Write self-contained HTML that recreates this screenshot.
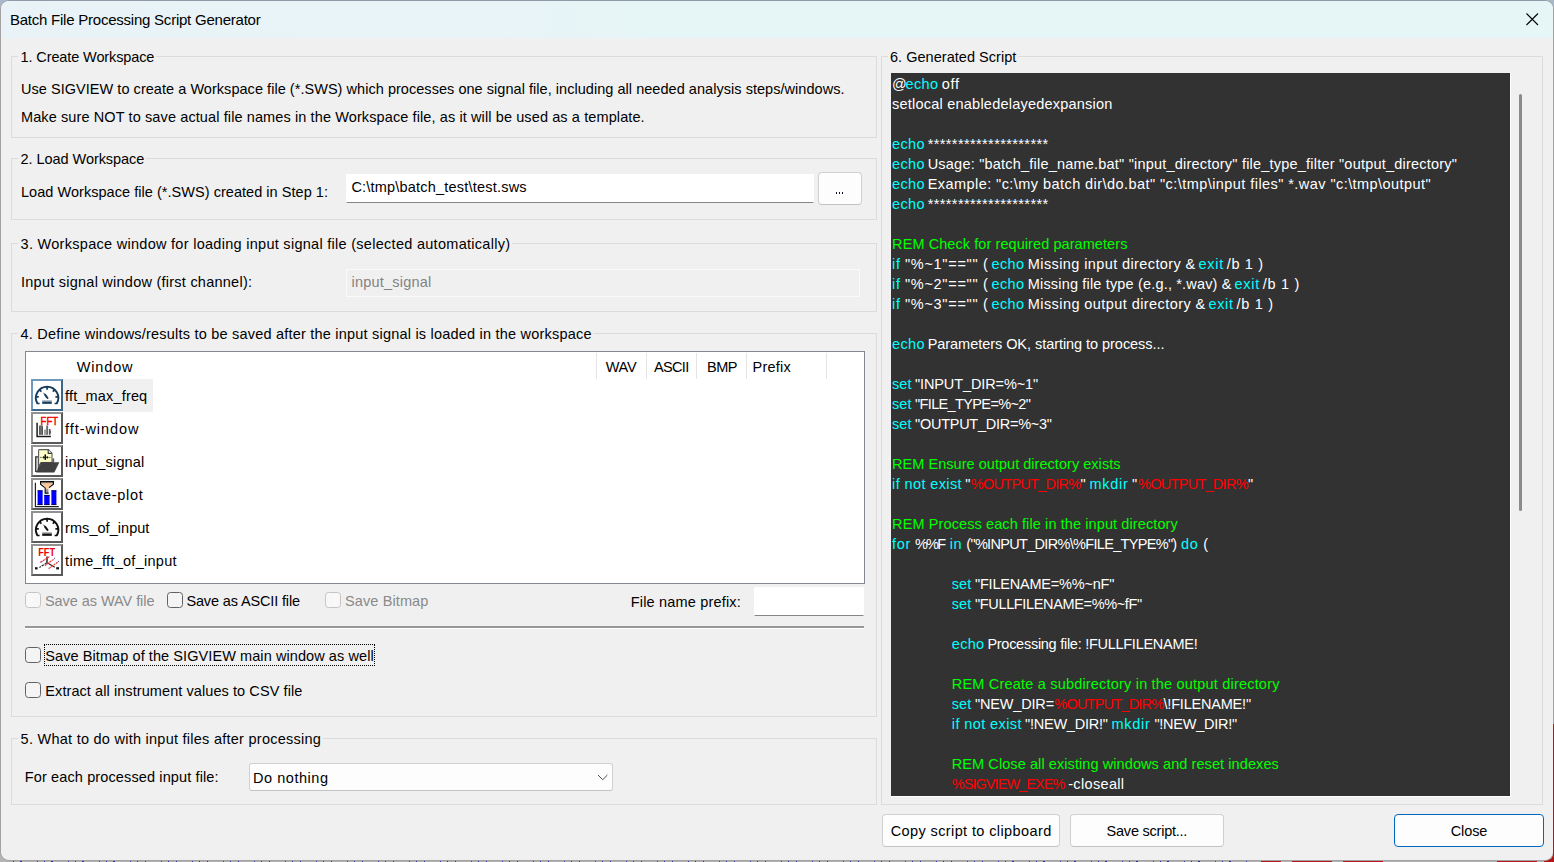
<!DOCTYPE html>
<html><head><meta charset="utf-8"><title>Batch File Processing Script Generator</title>
<style>
*{box-sizing:border-box;margin:0;padding:0}
html,body{width:1554px;height:862px;overflow:hidden}
body{position:relative;background:#b4b4b4;font-family:"Liberation Sans",sans-serif;font-size:14.5px;line-height:20px}
.bgtop{position:absolute;left:0;top:0;width:1554px;height:12px;background:#a9b8c8}
.bgred{position:absolute;top:861px;height:1px;background:#b8161c}
.bgcr{position:absolute;left:1544px;top:852px;width:10px;height:10px;background:#b01414}
.bgredr{position:absolute;left:1553px;top:724px;width:1px;height:138px;background:#b01818}
.win{position:absolute;left:0;top:0;width:1554px;height:861px;background:#f0f0f0;border:1px solid #a2a2a2;border-top-color:#8f9aa8;border-radius:9px;overflow:hidden}
.tb{position:absolute;left:0;top:1px;width:1554px;height:37px;background:linear-gradient(90deg,#e9f3f7 0%,#e8f4f7 33%,#e6f5f6 42%,#e6f6f6 100%)}
.t{position:absolute;white-space:pre;height:20px;line-height:20px}
.t.s{color:#fff}
.g{position:absolute;border:1px solid #dcdcdc}
.gl{position:absolute;background:#f0f0f0;height:4px}
.inp{position:absolute;background:#fff;border:1px solid #fff;border-bottom-color:#868686}
.btn{position:absolute;background:#fdfdfd;border:1px solid #d0d0d0;border-bottom-color:#c2c2c2;border-radius:4px}
.cb{position:absolute;width:16px;height:16px;border:1px solid #626262;border-radius:3.5px;background:#f4f4f4}
.cb.d{border-color:#c4c4c4;background:#f8f8f8}
.ic{position:absolute;left:31px;width:31px;height:31px;border:2px solid #7f7f7f;background:#fff}
.ic svg{position:absolute;left:0;top:0}
.hs{position:absolute;top:353px;width:1px;height:26px;background:#e5e5e5}
</style></head><body>
<div class="bgtop"></div>
<div class="bgcr"></div>
<div class="win"></div>
<div class="bgredr"></div>
<div style="position:absolute;left:13px;top:861px;width:1237px;height:1px;background:repeating-linear-gradient(90deg,#2a2a9a 0 1.4px,transparent 1.4px 7.5px,#2a2a9a 7.5px 8.6px,transparent 8.6px 24px,#3a3aa0 24px 25px,transparent 25px 31px)"></div>
<div class="bgred" style="left:1261px;width:20px"></div><div class="bgred" style="left:1292px;width:40px"></div><div class="bgred" style="left:1343px;width:40px"></div><div class="bgred" style="left:1497px;width:40px"></div>
<div class="tb" style="border-radius:8px 8px 0 0;left:1px;width:1552px"></div>
<svg style="position:absolute;left:1522px;top:9px" width="20" height="20"><path d="M4.5 4.5 L16 16 M16 4.5 L4.5 16" stroke="#000" stroke-width="1.1" fill="none"/></svg>

<!-- group boxes -->
<div class="g" style="left:11px;top:56px;width:866px;height:82px"></div>
<div class="g" style="left:11px;top:158px;width:866px;height:62px"></div>
<div class="g" style="left:11px;top:243px;width:866px;height:69px"></div>
<div class="g" style="left:11px;top:333px;width:866px;height:384px"></div>
<div class="g" style="left:11px;top:738px;width:866px;height:67px"></div>
<div class="g" style="left:881px;top:56px;width:662px;height:749px"></div>
<div class="gl" style="left:18px;top:54px;width:138px"></div>
<div class="gl" style="left:18px;top:156px;width:128px"></div>
<div class="gl" style="left:18px;top:241px;width:494px"></div>
<div class="gl" style="left:18px;top:331px;width:575px"></div>
<div class="gl" style="left:18px;top:736px;width:305px"></div>
<div class="gl" style="left:888px;top:54px;width:130px"></div>

<!-- group 2 -->
<div class="inp" style="left:346px;top:174px;width:468px;height:29px"></div>
<div class="btn" style="left:818px;top:172px;width:44px;height:33px"></div>
<div style="position:absolute;left:835.7px;top:192px;width:1.6px;height:2px;background:#1a0a2a;box-shadow:3px 0 0 #1a0a2a,6px 0 0 #1a0a2a"></div>
<!-- group 3 -->
<div style="position:absolute;left:346px;top:269px;width:514px;height:28px;background:#f0f0f0;border:1px solid #fafafa"></div>

<!-- list -->
<div style="position:absolute;left:25px;top:351px;width:840px;height:233px;background:#fff;border:1px solid #828790"></div>
<div class="hs" style="left:596px"></div><div class="hs" style="left:646px"></div><div class="hs" style="left:696px"></div><div class="hs" style="left:746px"></div><div class="hs" style="left:826px"></div>
<div style="position:absolute;left:62px;top:379px;width:91px;height:33px;background:#f0f0f0"></div>
<svg style="position:absolute;left:31px;top:379px" width="32" height="32" viewBox="0 0 32 32"><rect x="0" y="0" width="32" height="32" fill="#fff"/><path d="M0 0 H32 V2 H2 V32 H0 Z" fill="#6f98bd"/><path d="M32 0 V32 H0 L2 30 H30 V2 Z" fill="#3f6585"/><g><g fill="none" stroke="#173d5e" stroke-linecap="butt">
<path d="M6.4 24.5 A11.2 11.2 0 1 1 25.8 24.5" stroke-width="1.9"/>
<path d="M16.1 7.6 V10.8 M8.3 10.6 L10.4 12.7 M23.9 10.6 L21.8 12.7 M5 17.8 H7.8 M27.2 17.8 H24.4" stroke-width="1.7"/>
<path d="M12.4 13.8 L14.6 16.2" stroke-width="1"/>
<path d="M14.2 15.8 L16.5 19" stroke-width="2.1" stroke-linecap="round"/>
<path d="M11.2 21.9 H20.8" stroke-width="1.2" opacity="0.45"/>
<path d="M11.2 23.7 H20.8" stroke-width="2.3"/>
<path d="M5.8 24.5 H8.6 M23.6 24.5 H26.4" stroke-width="1.5"/>
</g></g></svg>
<svg style="position:absolute;left:31px;top:412px" width="32" height="32" viewBox="0 0 32 32"><rect x="0" y="0" width="32" height="32" fill="#fff"/><path d="M0 0 H32 V2 H2 V32 H0 Z" fill="#919191"/><path d="M32 0 V32 H0 L2 30 H30 V2 Z" fill="#5a5a5a"/><g><text x="9.6" y="13" font-family="Liberation Sans,sans-serif" font-size="11.6" fill="#f00000" stroke="#f00000" stroke-width="0.45" textLength="17.4" lengthAdjust="spacingAndGlyphs">FFT</text>
<rect x="8.1" y="13.4" width="3.9" height="9.4" fill="#8a8a8a"/>
<path d="M8.6 14 V22.8 M10 13.4 V22.8 M11.5 14.5 V22.8" stroke="#3a3a3a" stroke-width="0.7"/>
<rect x="13.2" y="17.6" width="1.6" height="5.2" fill="#8a8a8a"/>
<rect x="15.2" y="13.6" width="1.9" height="9.2" fill="#808080"/>
<path d="M16.1 13.6 V22.8" stroke="#444" stroke-width="0.6"/>
<rect x="17.9" y="17" width="1.6" height="5.8" fill="#555"/>
<path d="M19.3 18.5 L20.2 20 L19.3 21.5 Z" fill="#222"/>
<path d="M6.1 10.8 V24.4 H19.9" fill="none" stroke="#1c1c1c" stroke-width="1.5"/></g></svg>
<svg style="position:absolute;left:31px;top:445px" width="32" height="32" viewBox="0 0 32 32"><rect x="0" y="0" width="32" height="32" fill="#fff"/><path d="M0 0 H32 V2 H2 V32 H0 Z" fill="#919191"/><path d="M32 0 V32 H0 L2 30 H30 V2 Z" fill="#5a5a5a"/><g><path d="M4.7 11.8 H7.6 V26.5 H4.7 Z" fill="#cfcfcf" stroke="#2e2e2e" stroke-width="1.2"/>
<path d="M21.8 17.4 V14 L22.8 13.6 V17.4 Z" fill="#555" stroke="#555" stroke-width="0.6"/>
<path d="M8.2 4.6 H17.4 L21 8.2 V17.6 H10 L7.6 21.5 V5.2 Z" fill="#ffffc8" stroke="#5a5a5a" stroke-width="1.1"/>
<path d="M17.2 4.8 V8.4 H20.8" fill="#fff" stroke="#333" stroke-width="1.1"/>
<path d="M9.2 12.4 H10.6 M11.4 12.4 H17.6 M18.2 12.4 H19.4" stroke="#222" stroke-width="0.8"/>
<path d="M14.3 9.4 V14.9" stroke="#050505" stroke-width="1.5"/>
<path d="M12.7 11.2 V13.6 M16.3 11.2 V13.6" stroke="#111" stroke-width="1.1"/>
<path d="M10.4 17.4 H28 L23.2 27.2 H5.4 Z" fill="#404040" stroke="#3a3a3a" stroke-width="0.5"/></g></svg>
<svg style="position:absolute;left:31px;top:478px" width="32" height="32" viewBox="0 0 32 32"><rect x="0" y="0" width="32" height="32" fill="#fff"/><path d="M0 0 H32 V2 H2 V32 H0 Z" fill="#919191"/><path d="M32 0 V32 H0 L2 30 H30 V2 Z" fill="#5a5a5a"/><g><path d="M4.4 4.8 V28.6 H27.8" fill="none" stroke="#222" stroke-width="1.2"/>
<rect x="6.6" y="12.4" width="5" height="14.4" fill="#0000ff"/>
<rect x="13.2" y="17" width="5.4" height="9.8" fill="#0000ff"/>
<rect x="20.4" y="12.4" width="5" height="14.4" fill="#0000ff"/>
<path d="M6.6 12.8 H11.6 M13.2 17.4 H18.6 M20.4 12.8 H25.4 M6.4 26.6 H11.6 M13.2 26.6 H18.6 M20.4 26.6 H25.4" stroke="#00004a" stroke-width="0.9"/>
<path d="M10 5 H22 L17.6 9.4 V11.4 H15 V9.4 Z" fill="#ffc890"/>
<rect x="9.6" y="4.1" width="13" height="1.1" fill="#8a8a8a"/>
<path d="M9 3.6 H23" stroke="#0a0a0a" stroke-width="1.3"/>
<path d="M9.6 3.6 V6.2 L13.8 9.6 M22.4 3.6 V6.2 L18 9.6" fill="none" stroke="#0a0a0a" stroke-width="1.2"/>
<rect x="15" y="11.2" width="2.4" height="3.6" fill="#8f8f8f"/>
<path d="M14.2 9.4 V15.1 H17.6" fill="none" stroke="#0a0a0a" stroke-width="1.2"/></g></svg>
<svg style="position:absolute;left:31px;top:511px" width="32" height="32" viewBox="0 0 32 32"><rect x="0" y="0" width="32" height="32" fill="#fff"/><path d="M0 0 H32 V2 H2 V32 H0 Z" fill="#919191"/><path d="M32 0 V32 H0 L2 30 H30 V2 Z" fill="#5a5a5a"/><g><g fill="none" stroke="#111" stroke-linecap="butt">
<path d="M6.4 24.5 A11.2 11.2 0 1 1 25.8 24.5" stroke-width="1.9"/>
<path d="M16.1 7.6 V10.8 M8.3 10.6 L10.4 12.7 M23.9 10.6 L21.8 12.7 M5 17.8 H7.8 M27.2 17.8 H24.4" stroke-width="1.7"/>
<path d="M12.4 13.8 L14.6 16.2" stroke-width="1"/>
<path d="M14.2 15.8 L16.5 19" stroke-width="2.1" stroke-linecap="round"/>
<path d="M11.2 21.9 H20.8" stroke-width="1.2" opacity="0.45"/>
<path d="M11.2 23.7 H20.8" stroke-width="2.3"/>
<path d="M5.8 24.5 H8.6 M23.6 24.5 H26.4" stroke-width="1.5"/>
</g></g></svg>
<svg style="position:absolute;left:31px;top:544px" width="32" height="32" viewBox="0 0 32 32"><rect x="0" y="0" width="32" height="32" fill="#fff"/><path d="M0 0 H32 V2 H2 V32 H0 Z" fill="#919191"/><path d="M32 0 V32 H0 L2 30 H30 V2 Z" fill="#5a5a5a"/><g><text x="7.2" y="11.8" font-family="Liberation Sans,sans-serif" font-weight="bold" font-size="11" fill="#f00000" textLength="16.8" lengthAdjust="spacingAndGlyphs">FFT</text>
<path d="M16 12.4 V18.8" stroke="#2a2a2a" stroke-width="1.5"/>
<path d="M15.8 18.8 L8.4 23.6" fill="none" stroke="#2a2a2a" stroke-width="1.2" stroke-dasharray="2.6 0.9"/>
<path d="M16.2 18.8 L23.8 23.3" fill="none" stroke="#2a2a2a" stroke-width="1.2"/>
<path d="M9.6 18.2 L18.4 12.6 M14 21.6 L22.8 15.2 M18 24.4 L27.4 17.6" stroke="#f03030" stroke-width="1.1" stroke-dasharray="2.2 0.6"/>
<rect x="4" y="23.2" width="2.6" height="2.2" fill="#111"/><rect x="25.2" y="23.2" width="2.8" height="2.2" fill="#111"/>
<circle cx="23.6" cy="14.2" r="0.7" fill="#7070e0"/><circle cx="27.6" cy="17.4" r="0.7" fill="#7070e0"/>
<circle cx="9.8" cy="18.2" r="0.6" fill="#c050a0"/><circle cx="18" cy="24.4" r="0.6" fill="#e060a0"/></g></svg>

<!-- checkbox row -->
<div class="cb d" style="left:25px;top:592px"></div>
<div class="cb" style="left:167px;top:592px"></div>
<div class="cb d" style="left:325px;top:592px"></div>
<div class="inp" style="left:754px;top:587px;width:110px;height:29px"></div>
<div style="position:absolute;left:25px;top:626px;width:839px;height:3px;background:#fff;border-top:2px solid #979797"></div>
<div class="cb" style="left:25px;top:647px"></div>
<div style="position:absolute;left:44px;top:644px;width:331px;height:22px;border:1px dotted #000"></div>
<div class="cb" style="left:25px;top:682px"></div>

<!-- group 5 -->
<div class="btn" style="left:249px;top:763px;width:364px;height:28px;border-radius:3px"></div>
<svg style="position:absolute;left:595px;top:770px" width="16" height="14"><path d="M3 5 L7.7 9.7 L12.4 5" stroke="#505050" stroke-width="1" fill="none"/></svg>

<!-- script -->
<div style="position:absolute;left:891px;top:73px;width:620px;height:724px;background:#fff"></div>
<div style="position:absolute;left:891px;top:73px;width:619px;height:723px;background:#323232"></div>
<div style="position:absolute;left:1519px;top:94px;width:3px;height:417px;background:#8b8b8b;border-radius:1.5px"></div>

<!-- buttons -->
<div class="btn" style="left:882px;top:814px;width:178px;height:33px"></div>
<div class="btn" style="left:1070px;top:814px;width:154px;height:33px"></div>
<div class="btn" style="left:1394px;top:814px;width:150px;height:33px;border:1.5px solid #0067c0;background:#fdfdfd"></div>

<div class="t title" style="left:9.9px;top:9.80px;letter-spacing:-0.229px;color:#000;font-size:15px">Batch File Processing Script Generator</div>
<div class="t " style="left:20.6px;top:46.98px;letter-spacing:-0.119px;color:#000">1. Create Workspace</div>
<div class="t " style="left:21.0px;top:78.98px;letter-spacing:0.040px;color:#000">Use SIGVIEW to create a Workspace file (*.SWS) which processes one signal file, including all needed analysis steps/windows.</div>
<div class="t " style="left:21.0px;top:106.98px;letter-spacing:0.106px;color:#000">Make sure NOT to save actual file names in the Workspace file, as it will be used as a template.</div>
<div class="t " style="left:20.6px;top:148.98px;letter-spacing:-0.061px;color:#000">2. Load Workspace</div>
<div class="t " style="left:21.0px;top:181.98px;letter-spacing:0.040px;color:#000">Load Workspace file (*.SWS) created in Step 1:</div>
<div class="t " style="left:351.4px;top:176.98px;letter-spacing:0.206px;color:#000">C:\tmp\batch_test\test.sws</div>
<div class="t " style="left:20.6px;top:233.98px;letter-spacing:0.283px;color:#000">3. Workspace window for loading input signal file (selected automatically)</div>
<div class="t " style="left:21.0px;top:271.98px;letter-spacing:0.244px;color:#000">Input signal window (first channel):</div>
<div class="t " style="left:351.6px;top:271.98px;letter-spacing:0.199px;color:#838383">input_signal</div>
<div class="t " style="left:20.6px;top:323.98px;letter-spacing:0.209px;color:#000">4. Define windows/results to be saved after the input signal is loaded in the workspace</div>
<div class="t " style="left:76.8px;top:356.98px;letter-spacing:0.824px;color:#000">Window</div>
<div class="t " style="left:605.7px;top:356.98px;letter-spacing:-0.211px;color:#000">WAV</div>
<div class="t " style="left:653.9px;top:356.98px;letter-spacing:-0.644px;color:#000">ASCII</div>
<div class="t " style="left:707.0px;top:356.98px;letter-spacing:-0.511px;color:#000">BMP</div>
<div class="t " style="left:752.6px;top:356.98px;letter-spacing:0.204px;color:#000">Prefix</div>
<div class="t " style="left:65.1px;top:385.98px;letter-spacing:0.160px;color:#000">fft_max_freq</div>
<div class="t " style="left:65.1px;top:418.98px;letter-spacing:0.920px;color:#000">fft-window</div>
<div class="t " style="left:65.1px;top:451.98px;letter-spacing:0.163px;color:#000">input_signal</div>
<div class="t " style="left:65.1px;top:484.98px;letter-spacing:0.666px;color:#000">octave-plot</div>
<div class="t " style="left:65.1px;top:517.98px;letter-spacing:0.043px;color:#000">rms_of_input</div>
<div class="t " style="left:65.1px;top:550.98px;letter-spacing:0.284px;color:#000">time_fft_of_input</div>
<div class="t " style="left:45.0px;top:590.98px;letter-spacing:-0.060px;color:#8a8a8a">Save as WAV file</div>
<div class="t " style="left:186.4px;top:590.98px;letter-spacing:-0.139px;color:#000">Save as ASCII file</div>
<div class="t " style="left:345.1px;top:590.98px;letter-spacing:0.098px;color:#8a8a8a">Save Bitmap</div>
<div class="t " style="left:630.7px;top:591.98px;letter-spacing:0.182px;color:#000">File name prefix:</div>
<div class="t " style="left:45.3px;top:645.98px;letter-spacing:0.080px;color:#000">Save Bitmap of the SIGVIEW main window as well</div>
<div class="t " style="left:45.3px;top:680.98px;letter-spacing:0.079px;color:#000">Extract all instrument values to CSV file</div>
<div class="t " style="left:20.6px;top:728.98px;letter-spacing:0.256px;color:#000">5. What to do with input files after processing</div>
<div class="t " style="left:24.8px;top:766.98px;letter-spacing:0.123px;color:#000">For each processed input file:</div>
<div class="t " style="left:253.1px;top:767.98px;letter-spacing:0.529px;color:#000">Do nothing</div>
<div class="t " style="left:890.0px;top:46.98px;letter-spacing:0.031px;color:#000">6. Generated Script</div>
<div class="t " style="left:890.7px;top:820.98px;letter-spacing:0.391px;color:#000">Copy script to clipboard</div>
<div class="t " style="left:1106.6px;top:820.98px;letter-spacing:-0.232px;color:#000">Save script...</div>
<div class="t " style="left:1450.7px;top:820.98px;letter-spacing:-0.095px;color:#000">Close</div>
<div class="t s" style="left:892.1px;top:73.98px;letter-spacing:0.000px;color:#fff">@</div>
<div class="t s" style="left:905.6px;top:73.98px;letter-spacing:0.303px;color:#00ffff">echo</div>
<div class="t s" style="left:941.8px;top:73.98px;letter-spacing:0.700px;color:#fff">off</div>
<div class="t s" style="left:892.1px;top:93.98px;letter-spacing:0.220px;color:#fff">setlocal enabledelayedexpansion</div>
<div class="t s" style="left:892.1px;top:133.98px;letter-spacing:0.303px;color:#00ffff">echo</div>
<div class="t s" style="left:927.7px;top:133.98px;letter-spacing:0.398px;color:#fff">********************</div>
<div class="t s" style="left:892.1px;top:153.98px;letter-spacing:0.303px;color:#00ffff">echo</div>
<div class="t s" style="left:927.7px;top:153.98px;letter-spacing:0.211px;color:#fff">Usage: &quot;batch_file_name.bat&quot; &quot;input_directory&quot; file_type_filter &quot;output_directory&quot;</div>
<div class="t s" style="left:892.1px;top:173.98px;letter-spacing:0.303px;color:#00ffff">echo</div>
<div class="t s" style="left:927.7px;top:173.98px;letter-spacing:0.438px;color:#fff">Example: &quot;c:\my batch dir\do.bat&quot; &quot;c:\tmp\input files&quot; *.wav &quot;c:\tmp\output&quot;</div>
<div class="t s" style="left:892.1px;top:193.98px;letter-spacing:0.303px;color:#00ffff">echo</div>
<div class="t s" style="left:927.7px;top:193.98px;letter-spacing:0.398px;color:#fff">********************</div>
<div class="t s" style="left:892.1px;top:233.98px;letter-spacing:0.075px;color:#00ff00">REM Check for required parameters</div>
<div class="t s" style="left:892.1px;top:253.98px;letter-spacing:0.700px;color:#00ffff">if</div>
<div class="t s" style="left:905.0px;top:253.98px;letter-spacing:0.700px;color:#fff">&quot;%~1&quot;==&quot;&quot; (</div>
<div class="t s" style="left:991.6px;top:253.98px;letter-spacing:0.303px;color:#00ffff">echo</div>
<div class="t s" style="left:1027.8px;top:253.98px;letter-spacing:0.396px;color:#fff">Missing input directory &amp;</div>
<div class="t s" style="left:1198.5px;top:253.98px;letter-spacing:0.700px;color:#00ffff">exit</div>
<div class="t s" style="left:1226.8px;top:253.98px;letter-spacing:0.647px;color:#fff">/b 1 )</div>
<div class="t s" style="left:892.1px;top:273.98px;letter-spacing:0.700px;color:#00ffff">if</div>
<div class="t s" style="left:905.0px;top:273.98px;letter-spacing:0.700px;color:#fff">&quot;%~2&quot;==&quot;&quot; (</div>
<div class="t s" style="left:991.6px;top:273.98px;letter-spacing:0.303px;color:#00ffff">echo</div>
<div class="t s" style="left:1027.8px;top:273.98px;letter-spacing:0.169px;color:#fff">Missing file type (e.g., *.wav) &amp;</div>
<div class="t s" style="left:1234.6px;top:273.98px;letter-spacing:0.700px;color:#00ffff">exit</div>
<div class="t s" style="left:1262.7px;top:273.98px;letter-spacing:0.700px;color:#fff">/b 1 )</div>
<div class="t s" style="left:892.1px;top:293.98px;letter-spacing:0.700px;color:#00ffff">if</div>
<div class="t s" style="left:905.0px;top:293.98px;letter-spacing:0.700px;color:#fff">&quot;%~3&quot;==&quot;&quot; (</div>
<div class="t s" style="left:991.6px;top:293.98px;letter-spacing:0.303px;color:#00ffff">echo</div>
<div class="t s" style="left:1027.8px;top:293.98px;letter-spacing:0.424px;color:#fff">Missing output directory &amp;</div>
<div class="t s" style="left:1208.4px;top:293.98px;letter-spacing:0.700px;color:#00ffff">exit</div>
<div class="t s" style="left:1236.5px;top:293.98px;letter-spacing:0.700px;color:#fff">/b 1 )</div>
<div class="t s" style="left:892.1px;top:333.98px;letter-spacing:0.303px;color:#00ffff">echo</div>
<div class="t s" style="left:927.7px;top:333.98px;letter-spacing:-0.048px;color:#fff">Parameters OK, starting to process...</div>
<div class="t s" style="left:892.1px;top:373.98px;letter-spacing:0.025px;color:#00ffff">set</div>
<div class="t s" style="left:915.0px;top:373.98px;letter-spacing:-0.114px;color:#fff">&quot;INPUT_DIR=%~1&quot;</div>
<div class="t s" style="left:892.1px;top:393.98px;letter-spacing:0.025px;color:#00ffff">set</div>
<div class="t s" style="left:915.0px;top:393.98px;letter-spacing:-0.632px;color:#fff">&quot;FILE_TYPE=%~2&quot;</div>
<div class="t s" style="left:892.1px;top:413.98px;letter-spacing:0.025px;color:#00ffff">set</div>
<div class="t s" style="left:915.0px;top:413.98px;letter-spacing:-0.256px;color:#fff">&quot;OUTPUT_DIR=%~3&quot;</div>
<div class="t s" style="left:892.1px;top:453.98px;letter-spacing:0.034px;color:#00ff00">REM Ensure output directory exists</div>
<div class="t s" style="left:892.1px;top:473.98px;letter-spacing:0.379px;color:#00ffff">if not exist</div>
<div class="t s" style="left:965.3px;top:473.98px;letter-spacing:0.000px;color:#fff">&quot;</div>
<div class="t s" style="left:970.8px;top:473.98px;letter-spacing:-0.725px;color:#ff0000">%OUTPUT_DIR%</div>
<div class="t s" style="left:1080.5px;top:473.98px;letter-spacing:0.000px;color:#fff">&quot;</div>
<div class="t s" style="left:1089.6px;top:473.98px;letter-spacing:0.700px;color:#00ffff">mkdir</div>
<div class="t s" style="left:1132.1px;top:473.98px;letter-spacing:0.000px;color:#fff">&quot;</div>
<div class="t s" style="left:1138.1px;top:473.98px;letter-spacing:-0.725px;color:#ff0000">%OUTPUT_DIR%</div>
<div class="t s" style="left:1247.9px;top:473.98px;letter-spacing:0.000px;color:#fff">&quot;</div>
<div class="t s" style="left:892.1px;top:513.98px;letter-spacing:0.103px;color:#00ff00">REM Process each file in the input directory</div>
<div class="t s" style="left:892.1px;top:533.98px;letter-spacing:0.700px;color:#00ffff">for</div>
<div class="t s" style="left:915.0px;top:533.98px;letter-spacing:-1.800px;color:#fff">%%F</div>
<div class="t s" style="left:949.7px;top:533.98px;letter-spacing:0.700px;color:#00ffff">in</div>
<div class="t s" style="left:966.3px;top:533.98px;letter-spacing:-0.683px;color:#fff">(&quot;%INPUT_DIR%\%FILE_TYPE%&quot;)</div>
<div class="t s" style="left:1181.0px;top:533.98px;letter-spacing:0.700px;color:#00ffff">do</div>
<div class="t s" style="left:1203.3px;top:533.98px;letter-spacing:0.000px;color:#fff">(</div>
<div class="t s" style="left:951.8px;top:573.98px;letter-spacing:0.025px;color:#00ffff">set</div>
<div class="t s" style="left:975.0px;top:573.98px;letter-spacing:-0.202px;color:#fff">&quot;FILENAME=%%~nF&quot;</div>
<div class="t s" style="left:951.8px;top:593.98px;letter-spacing:0.025px;color:#00ffff">set</div>
<div class="t s" style="left:975.0px;top:593.98px;letter-spacing:-0.353px;color:#fff">&quot;FULLFILENAME=%%~fF&quot;</div>
<div class="t s" style="left:951.8px;top:633.98px;letter-spacing:0.303px;color:#00ffff">echo</div>
<div class="t s" style="left:987.4px;top:633.98px;letter-spacing:-0.270px;color:#fff">Processing file: !FULLFILENAME!</div>
<div class="t s" style="left:951.8px;top:673.98px;letter-spacing:0.193px;color:#00ff00">REM Create a subdirectory in the output directory</div>
<div class="t s" style="left:951.8px;top:693.98px;letter-spacing:0.025px;color:#00ffff">set</div>
<div class="t s" style="left:975.0px;top:693.98px;letter-spacing:-0.172px;color:#fff">&quot;NEW_DIR=</div>
<div class="t s" style="left:1054.3px;top:693.98px;letter-spacing:-0.779px;color:#ff0000">%OUTPUT_DIR%</div>
<div class="t s" style="left:1163.5px;top:693.98px;letter-spacing:-0.200px;color:#fff">\!FILENAME!&quot;</div>
<div class="t s" style="left:951.8px;top:713.98px;letter-spacing:0.407px;color:#00ffff">if not exist</div>
<div class="t s" style="left:1025.1px;top:713.98px;letter-spacing:-0.250px;color:#fff">&quot;!NEW_DIR!&quot;</div>
<div class="t s" style="left:1111.6px;top:713.98px;letter-spacing:0.700px;color:#00ffff">mkdir</div>
<div class="t s" style="left:1154.4px;top:713.98px;letter-spacing:-0.250px;color:#fff">&quot;!NEW_DIR!&quot;</div>
<div class="t s" style="left:951.8px;top:753.98px;letter-spacing:0.081px;color:#00ff00">REM Close all existing windows and reset indexes</div>
<div class="t s" style="left:951.8px;top:773.98px;letter-spacing:-0.952px;color:#ff0000">%SIGVIEW_EXE%</div>
<div class="t s" style="left:1068.2px;top:773.98px;letter-spacing:0.337px;color:#fff">-closeall</div>
</body></html>
